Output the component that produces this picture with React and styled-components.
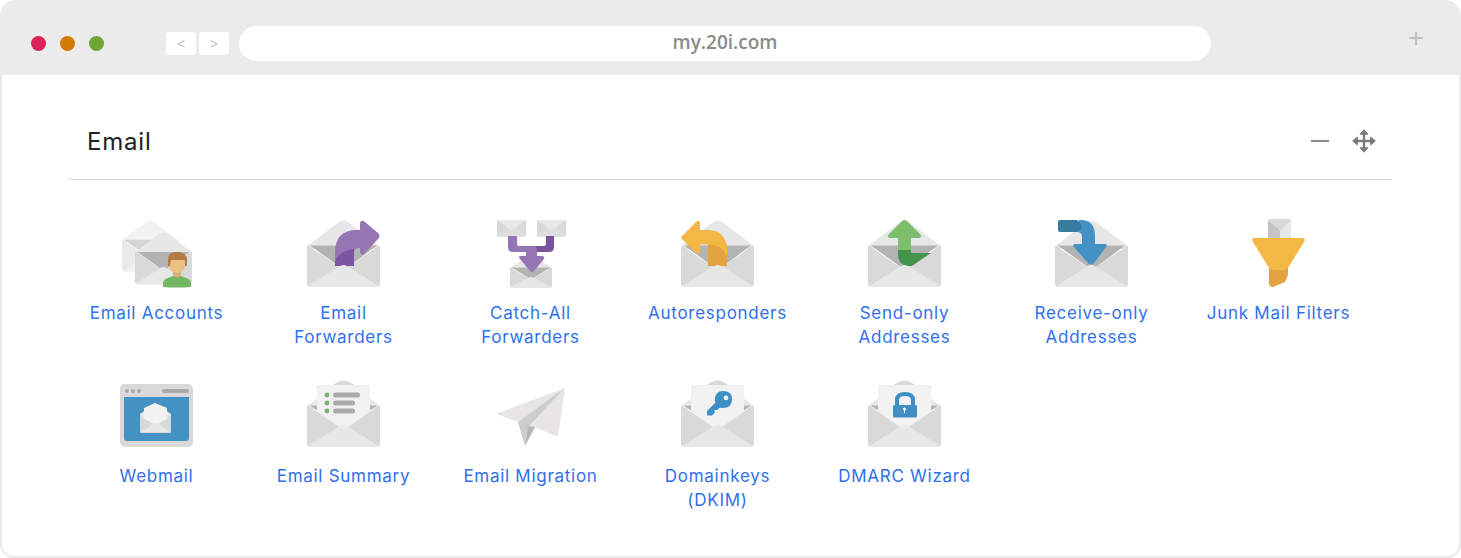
import React from 'react';
import styled, { createGlobalStyle } from 'styled-components';

const Global = createGlobalStyle`
  html, body { margin: 0; padding: 0; background: #fff; }
  #root { width: 1461px; height: 558px; overflow: hidden; }
`;

const Frame = styled.div`
  box-sizing: border-box;
  width: 1461px;
  height: 558px;
  border: 2px solid #eaeaea;
  border-radius: 16px 16px 14px 14px;
  overflow: hidden;
  background: #fff;
`;
const Toolbar = styled.div`
  box-sizing: border-box;
  height: 73px;
  padding: 24px 0 0 29px;
  background: #ebebeb;
  display: flex;
  align-items: flex-start;
`;
const Dots = styled.div`
  display: flex;
  gap: 14px;
  margin-top: 10px;
  margin-right: 62px;
`;
const Dot = styled.span`
  width: 15px;
  height: 15px;
  border-radius: 50%;
  background: ${p => p.$color};
`;
const NavGroup = styled.div`
  display: flex;
  gap: 3px;
  margin-top: 6px;
  margin-right: 10px;
`;
const NavButton = styled.span`
  width: 30px;
  height: 23px;
  background: #fff;
  border-radius: 3px;
  color: #b9b9b9;
  font: 400 14px/23px "Open Sans", sans-serif;
  text-align: center;
`;
const UrlBar = styled.div`
  width: 972px;
  height: 35px;
  border-radius: 17.5px;
  background: #fff;
  color: #8a8a8a;
  font: 600 19px/33px "Open Sans", sans-serif;
  text-align: center;
`;
const Plus = styled.span`
  margin-left: 197px;
  margin-top: -4px;
  color: #bcbcbc;
  font: 400 28px/30px "Open Sans", sans-serif;
`;
const Panel = styled.section`
  margin: 27px 67px 0 66px;
`;
const Header = styled.header`
  box-sizing: border-box;
  height: 78px;
  padding: 0 16px 0 19px;
  border-bottom: 1.5px solid #dcdcdc;
  display: flex;
  align-items: center;
  justify-content: space-between;
`;
const Title = styled.h2`
  margin: 2px 0 0;
  font: 400 24px/30px Inter, sans-serif;
  letter-spacing: 0.8px;
  color: #222;
`;
const Controls = styled.div`
  display: flex;
  align-items: center;
  gap: 23px;
`;
const Minus = styled.span`
  width: 18px;
  height: 2px;
  background: #8a8a8a;
`;
const Grid = styled.div`
  display: grid;
  grid-template-columns: repeat(7, 187px);
  grid-auto-rows: 163px;
  margin: 36px 0 0 61px;
`;
const Tile = styled.a`
  display: flex;
  flex-direction: column;
  align-items: center;
  text-align: center;
`;
const IconSvg = styled.svg`
  width: 73px;
  height: 75px;
  flex: none;
  overflow: visible;
`;
const Label = styled.span`
  margin-top: 10px;
  max-width: 147px;
  font: 400 17px/24px Inter, sans-serif;
  letter-spacing: 0.72px;
  color: #2f70ee;
`;

const Envelope = ({ x = 0, y = 4, s = 1, behind, children, opacity }) => (
  <g transform={`translate(${x} ${y}) scale(${s})`} opacity={opacity}>
    <path d="M0 29 V26 L32 2 Q36.5 -1 41 2 L73 26 V29Z" fill="#e6e7e7" />
    <path d="M3 25.5 H70 L37 50Z" fill="#b3b3b3" />
    {behind}
    <path d="M0 26 L3 27 L36.5 50 L70 27 L73 26 V63 Q73 67 69 67 H4 Q0 67 0 63Z" fill="#d9d9d9" />
    {children}
    <path d="M2 65.5 L32 46.5 Q36.5 43.5 41 46.5 L71 65.5 Q70.5 67 69 67 H4 Q2.5 67 2 65.5Z" fill="#e6e7e7" />
  </g>
);

const Svg = ({ children }) => <IconSvg viewBox="0 0 73 75">{children}</IconSvg>;

const AccountsIcon = () => (
  <Svg>
    <Envelope x={2} y={4} s={0.77} opacity={0.55} />
    <Envelope x={15} y={16} s={0.78} />
    <path d="M43 71 V67 Q43 63 49 61.5 L53 60 H61 L65 61.5 Q71 63 71 67 V71 Q57 72 43 71Z" fill="#72b862" />
    <path d="M53 52 H61 V59 Q57 64 53 59Z" fill="#d9ac70" />
    <path d="M49 44 H65 V48 Q65 57 57 57 Q49 57 49 48Z" fill="#eac083" />
    <path d="M48 50 V43 Q48 36 57 36 Q67 36 67 44 V50 L65 50 V44 H51 L50 50Z" fill="#b57b45" />
  </Svg>
);
const ForwardIcon = () => (
  <Svg>
    <Envelope>
      <path d="M28 46 V33 Q28 10 50 10 H53 V3 Q54 -1 58 2 L71 13 Q74 16 71 19 L58 33 Q54 37 53 32 V28 H52 Q47 28 47 33 V46Z" fill="#9675b4" />
      <path d="M28 46 V42 Q31 31 47 29 V46Z" fill="#7b539e" />
    </Envelope>
  </Svg>
);
const SmallEnv = ({ x, y }) => (
  <g transform={`translate(${x} ${y})`}>
    <rect width="29" height="16.5" rx="1" fill="#d9d9d9" />
    <path d="M0 16.5 L10 8 L14.5 11 L19 8 L29 16.5Z" fill="#dedede" />
    <path d="M0 0 H29 L14.5 11Z" fill="#e6e7e7" />
  </g>
);
const CatchAllIcon = () => (
  <Svg>
    <SmallEnv x={3} y={4} />
    <SmallEnv x={43} y={4} />
    <g transform="translate(16 39) scale(0.575 0.49)">
      <path d="M0 29 V26 L32 2 Q36.5 -1 41 2 L73 26 V29Z" fill="#e6e7e7" />
      <path d="M3 25.5 H70 L37 50Z" fill="#b3b3b3" />
      <path d="M0 26 L3 27 L36.5 50 L70 27 L73 26 V63 Q73 67 69 67 H4 Q0 67 0 63Z" fill="#d9d9d9" />
      <path d="M2 65.5 L32 46.5 Q36.5 43.5 41 46.5 L71 65.5 Q70.5 67 69 67 H4 Q2.5 67 2 65.5Z" fill="#e6e7e7" />
    </g>
    <path d="M37 30 H50 Q52 30 52 28 V20 H60 V31 Q60 36 55 36 H37Z" fill="#7b539e" />
    <path d="M14 20 H23 V28 Q23 30 25 30 H40 Q43 31 43 35 V41 H32 V36 H19 Q14 36 14 31Z" fill="#9675b4" />
    <path d="M32 40 H26 Q24 41 26 43 L36 55 Q38 57 40 55 L50 43 Q51 41 49 40 H43Z" fill="#9675b4" />
  </Svg>
);
const AutoIcon = () => (
  <Svg>
    <Envelope>
      <path d="M27 24 H46 V46 H27Z" fill="#e5a241" />
    </Envelope>
    <path d="M0.8 23 Q-0.5 21.5 1 20 L15 6 Q18 3 19 7 V14 H26 Q46 14 46 35 V41 Q45 34 36 30 Q31 28.500 27.500 28.500 H19 V36 Q18 39 15 37Z" fill="#f3b843" />
  </Svg>
);
const SendIcon = () => (
  <Svg>
    <Envelope>
      <path d="M30 27 H43 V33 H63 L44 46 H38 Q30 43 30 35Z" fill="#44944e" />
    </Envelope>
    <path transform="translate(0 4)" d="M30 30 V18 H22 Q18 17 21 14 L34 1 Q36.500 -1 39 1 L52 14 Q55 17 51 18 H43 V30Z" fill="#7cbe6b" />
  </Svg>
);
const ReceiveIcon = () => (
  <Svg>
    <Envelope />
    <g transform="translate(0 4)">
      <path d="M24 0 H26 Q40 0 40 16 V24 H50 Q53 24 51 27 L40 42 Q36 47 32 42 L19 27 Q17 24 20 24 H27 V17 Q27 12 22 12Z" fill="#4492c4" />
      <path d="M5 0 H22 Q26 3 26.500 7 Q26 10 22 12 H5 Q3 12 3 10 V2 Q3 0 5 0Z" fill="#3a7ba0" />
    </g>
  </Svg>
);
const JunkIcon = () => (
  <Svg>
    <path d="M27 3 H49 V23 H26 V4Z" fill="#e6e7e7" />
    <path d="M26 4 L38 14 V23 H26Z" fill="#c4c4c4" />
    <path d="M27 3 H49 L38 15Z" fill="#d9d9d9" />
    <path d="M27 52 H46 V59 L43 66 L31 71 Q27 71 27 67Z" fill="#e5a241" />
    <path d="M12 22 H61 Q64 23 62 26 L46 52 Q45 54 42 54 H31 Q28 54 27 52 L11 26 Q9 23 12 22Z" fill="#f3b843" />
  </Svg>
);
const WebmailIcon = () => (
  <Svg>
    <rect y="5" width="73" height="63" rx="5" fill="#d9d9d9" />
    <path d="M4 18 H69 V59 Q69 62 66 62 H7 Q4 62 4 59Z" fill="#4492c4" />
    <circle cx="7" cy="12" r="2" fill="#aaa" />
    <circle cx="13" cy="12" r="2" fill="#aaa" />
    <circle cx="19" cy="12" r="2" fill="#aaa" />
    <rect x="42" y="10" width="27" height="4" rx="2" fill="#aaa" />
    <path d="M20 35 L35 24 L51 35 V53 H20Z" fill="#e6e7e7" />
    <path d="M20 36 L36 47 L51 36 V53 Q51 54 50 54 H21 Q20 54 20 53Z" fill="#d9d9d9" />
    <path d="M24 29 L35 24 L47 29 V40 L36 45 L24 40Z" fill="#f2f2f2" />
    <path d="M21 53 L35 44 Q36 43.500 37 44 L50 53Z" fill="#e6e7e7" />
  </Svg>
);
const Paper = () => (
  <>
    <path d="M26 5 Q36.500 -4 47 5Z" fill="#d9d9d9" />
    <rect x="10" y="5" width="53" height="48" fill="#f2f2f2" />
  </>
);
const SummaryIcon = () => (
  <Svg>
    <Envelope y={1} behind={<Paper />} />
    <circle cx="20" cy="16" r="2.4" fill="#72b862" />
    <circle cx="20" cy="24" r="2.4" fill="#72b862" />
    <circle cx="20" cy="32" r="2.4" fill="#72b862" />
    <rect x="26" y="13.500" width="27" height="5" rx="2.500" fill="#aaa" />
    <rect x="26" y="21.500" width="22" height="5" rx="2.500" fill="#aaa" />
    <rect x="26" y="29.500" width="22" height="5" rx="2.500" fill="#aaa" />
  </Svg>
);
const PlaneIcon = () => (
  <Svg>
    <path d="M70 9.500 Q71 9 71 11 L64 56 Q63.500 58 61 57 L41 48 L31 67 L24 43 L4 35.500 Q3 34.500 4 34Z" fill="#e8e6e5" />
    <path d="M70 9.500 L24 43 L31 67 L34 48Z" fill="#cdcdcd" />
    <path d="M34 47 L31 67 L41 48Z" fill="#b7b7b7" />
  </Svg>
);
const KeyIcon = () => (
  <Svg>
    <Envelope y={1} behind={<Paper />} />
    <path fillRule="evenodd" d="M42 12 Q51 12 51 20 Q51 29 42 29 Q40 29 39 28.500 L36 31 H33.500 V34 L31 36.500 H27 Q26 36.500 26 35.500 V32 L34.500 23.500 Q33.500 22 34 20 Q34.500 12 42 12Z M45 16.500 A2.400 2.400 0 1 0 45.010 16.500Z" fill="#3f8fc4" />
  </Svg>
);
const LockIcon = () => (
  <Svg>
    <Envelope y={1} behind={<Paper />} />
    <path d="M29 26 V21 Q29 15 37 15 Q45 15 45 21 V26" fill="none" stroke="#3f8fc4" strokeWidth="4" />
    <rect x="25" y="26" width="24" height="12.500" rx="1.500" fill="#3f8fc4" />
    <circle cx="36.500" cy="30" r="1.500" fill="#fff" />
    <rect x="36" y="30" width="1" height="4" fill="#fff" />
  </Svg>
);

const MoveIcon = () => (
  <svg width="24" height="24" viewBox="0 0 23 23" fill="#7c7c7c" stroke="#7c7c7c" strokeLinejoin="round">
    <path d="M11.500 3 V20 M3 11.500 H20" strokeWidth="2.200" fill="none" />
    <path d="M11.500 1 L15 5 H8Z M11.500 22 L15 18 H8Z M1 11.500 L5 8 V15Z M22 11.500 L18 8 V15Z" strokeWidth="1.200" />
  </svg>
);

const items = [
  ['Email Accounts', AccountsIcon],
  ['Email Forwarders', ForwardIcon],
  ['Catch-All Forwarders', CatchAllIcon],
  ['Autoresponders', AutoIcon],
  ['Send-only Addresses', SendIcon],
  ['Receive-only Addresses', ReceiveIcon],
  ['Junk Mail Filters', JunkIcon],
  ['Webmail', WebmailIcon],
  ['Email Summary', SummaryIcon],
  ['Email Migration', PlaneIcon],
  ['Domainkeys (DKIM)', KeyIcon],
  ['DMARC Wizard', LockIcon],
];

export default function App() {
  return (
    <Frame>
      <Global />
      <Toolbar>
        <Dots>
          <Dot $color="#dc2358" />
          <Dot $color="#d27b00" />
          <Dot $color="#6fa534" />
        </Dots>
        <NavGroup>
          <NavButton>&lt;</NavButton>
          <NavButton>&gt;</NavButton>
        </NavGroup>
        <UrlBar>my.20i.com</UrlBar>
        <Plus>+</Plus>
      </Toolbar>
      <Panel>
        <Header>
          <Title>Email</Title>
          <Controls>
            <Minus />
            <MoveIcon />
          </Controls>
        </Header>
      </Panel>
      <Grid>
        {items.map(([label, Icon]) => (
          <Tile key={label}>
            <Icon />
            <Label>{label}</Label>
          </Tile>
        ))}
      </Grid>
    </Frame>
  );
}
